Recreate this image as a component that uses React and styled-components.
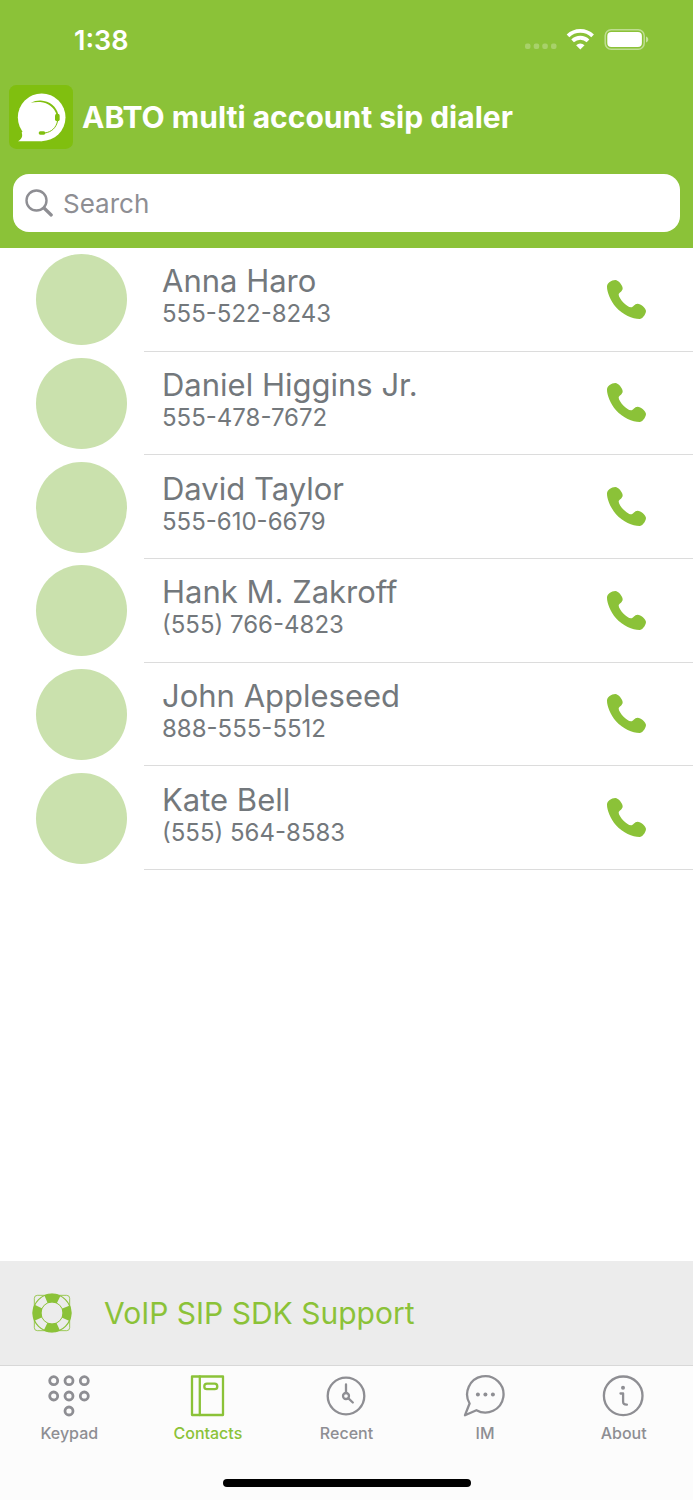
import React, { useState } from 'react'
import styled, { createGlobalStyle } from 'styled-components'

const contacts = [
  { name: 'Anna Haro', phone: '555-522-8243' },
  { name: 'Daniel Higgins Jr.', phone: '555-478-7672' },
  { name: 'David Taylor', phone: '555-610-6679' },
  { name: 'Hank M. Zakroff', phone: '(555) 766-4823' },
  { name: 'John Appleseed', phone: '888-555-5512' },
  { name: 'Kate Bell', phone: '(555) 564-8583' },
]

const tabs = [
  { label: 'Keypad', Icon: KeypadIcon },
  { label: 'Contacts', Icon: ContactsIcon },
  { label: 'Recent', Icon: RecentIcon },
  { label: 'IM', Icon: MessageIcon },
  { label: 'About', Icon: AboutIcon },
]

function App() {
  const [query, setQuery] = useState('')
  const [active, setActive] = useState('Contacts')

  const visible = contacts.filter((c) => c.name.toLowerCase().includes(query.toLowerCase()))

  return (
    <>
      <GlobalStyle />
      <Page>
        <Header>
          <StatusBar>
            <Time>1:38</Time>
            <StatusIcons />
          </StatusBar>
          <Brand>
            <LogoIcon />
            <Title>ABTO multi account sip dialer</Title>
          </Brand>
          <SearchBox>
            <SearchIcon />
            <SearchInput
              type="text"
              aria-label="Search"
              placeholder="Search"
              value={query}
              onChange={(e) => setQuery(e.target.value)}
            />
          </SearchBox>
        </Header>

        <Main>
          <ContactList>
            {visible.map((c) => (
              <ContactRow key={c.name}>
                <Avatar />
                <ContactBody>
                  <div>
                    <ContactName>{c.name}</ContactName>
                    <ContactPhone>{c.phone}</ContactPhone>
                  </div>
                  <CallButton aria-label={'Call ' + c.name}>
                    <PhoneIcon />
                  </CallButton>
                </ContactBody>
              </ContactRow>
            ))}
          </ContactList>
        </Main>

        <Support href="#support">
          <LifebuoyIcon />
          VoIP SIP SDK Support
        </Support>

        <Footer>
          <TabBar>
            {tabs.map(({ label, Icon }) => (
              <Tab key={label} $active={label === active} onClick={() => setActive(label)}>
                <Icon />
                {label}
              </Tab>
            ))}
          </TabBar>
          <HomeIndicator />
        </Footer>
      </Page>
    </>
  )
}

function StatusIcons() {
  return (
    <svg width="124" height="24" viewBox="0 0 124 24" fill="#fff" aria-hidden="true">
      <g opacity="0.25">
        <rect x="0" y="15.5" width="5.5" height="5.5" rx="2" />
        <rect x="8.7" y="15.5" width="5.5" height="5.5" rx="2" />
        <rect x="17.3" y="15.5" width="5.5" height="5.5" rx="2" />
        <rect x="26" y="15.5" width="5.5" height="5.5" rx="2" />
      </g>
      <g fill="none" stroke="#fff" strokeWidth="3.8">
        <path d="M43 7.9a17.6 17.6 0 0 1 24.6 0" />
        <path d="M47.6 12.9a11 11 0 0 1 15.4 0" />
      </g>
      <path d="M55.3 21.6l-4.2-4.4a6.2 6.2 0 0 1 8.4 0z" />
      <rect x="80.2" y="1.8" width="39" height="19.4" rx="6" fill="none" stroke="#fff" strokeWidth="1.5" opacity="0.45" />
      <rect x="82.3" y="4" width="34.6" height="15" rx="4" />
      <path d="M121 8.5c3 1 3 5 0 6z" opacity="0.5" />
    </svg>
  )
}

function LogoIcon() {
  return (
    <svg width="64" height="64" viewBox="0 0 192 192" aria-hidden="true">
      <rect width="192" height="192" rx="22" fill="#80bf0f" />
      <circle cx="98" cy="97" r="71.500" fill="#fff" />
      <path d="M98 168.500H27c11-6 15-14 11-26L60 120Z" fill="#fff" />
      <path d="M65 53Q80 46 95 46.500C122 48 143 65 148 89h-5C136 68 118 53 94 51Q80 50 65 53Z" fill="#80bf0f" />
      <rect x="138" y="86" width="14" height="23" rx="6" fill="#80bf0f" />
      <path d="M146 107c-4 20-17 34-39 37" fill="none" stroke="#80bf0f" strokeWidth="3" />
      <rect x="89" y="139" width="20" height="10" rx="5" fill="#80bf0f" />
    </svg>
  )
}

function SearchIcon() {
  return (
    <svg width="28" height="28" viewBox="0 0 28 28" fill="none" stroke="#8e8e93" aria-hidden="true">
      <circle cx="11.500" cy="11.500" r="10" strokeWidth="2.400" />
      <path d="M19 19l7.200 7" strokeWidth="3.200" strokeLinecap="round" />
    </svg>
  )
}

function PhoneIcon() {
  return (
    <svg width="39" height="39" viewBox="0 0 117 117" fill="currentColor" aria-hidden="true">
      <path d="M0 20C0 9 13 0 25 0C34 0 47 16 47 25C47 35 35 38 35 44C36 56 59 81 72 82C79 82 82 71 92 71C101 71 117 84 117 93C116 104 106 117 98 117C76 117 48 105 27 82C10 61 0 36 0 20Z" />
    </svg>
  )
}

function LifebuoyIcon() {
  return (
    <svg width="40" height="40" viewBox="0 0 120 120" fill="none" stroke="currentColor" aria-hidden="true">
      <rect x="7" y="7" width="106" height="106" rx="9" strokeWidth="2.500" />
      <circle cx="60" cy="60" r="57" fill="#ececec" strokeWidth="3.500" />
      <circle cx="60" cy="60" r="33" strokeWidth="3" />
      <circle cx="60" cy="60" r="45" strokeWidth="26" pathLength="80" strokeDasharray="11 9" strokeDashoffset="5.500" />
    </svg>
  )
}

function TabIcon({ children }) {
  return (
    <svg
      width="44"
      height="44"
      viewBox="0 0 44 44"
      fill="none"
      stroke="currentColor"
      strokeWidth="2.300"
      strokeLinecap="round"
      strokeLinejoin="round"
      aria-hidden="true"
    >
      {children}
    </svg>
  )
}

function KeypadIcon() {
  const dots = [[6.7, 6.7], [22, 6.7], [37.3, 6.7], [6.7, 22], [22, 22], [37.3, 22], [22, 37]]
  return (
    <TabIcon>
      {dots.map(([x, y]) => (
        <circle key={x + '-' + y} cx={x} cy={y} r="4" strokeWidth="2.800" />
      ))}
    </TabIcon>
  )
}

function ContactsIcon() {
  return (
    <TabIcon>
      <rect x="6" y="2.500" width="31" height="38.500" />
      <path d="M13.800 2.500v38.500" />
      <rect x="18.300" y="9.700" width="13" height="5.500" rx="2.700" />
    </TabIcon>
  )
}

function RecentIcon() {
  return (
    <TabIcon>
      <circle cx="22" cy="22" r="18.300" />
      <path d="M22 10.500v8.500M24.200 24.200l4.600 4.300" />
      <circle cx="22" cy="22" r="3" />
    </TabIcon>
  )
}

function MessageIcon() {
  return (
    <TabIcon>
      <path d="M6.600 29.500A18.200 18.200 0 1 1 13.400 36.200L2 41.200Z" />
      <g fill="currentColor" stroke="none">
        <circle cx="14.900" cy="20.500" r="2" />
        <circle cx="22.400" cy="20.500" r="2" />
        <circle cx="29.900" cy="20.500" r="2" />
      </g>
    </TabIcon>
  )
}

function AboutIcon() {
  return (
    <TabIcon>
      <circle cx="21.200" cy="21.800" r="19.300" />
      <path d="M18.500 19.500h2.600v8c0 2.200.9 3.300 3.800 3.200" />
      <circle cx="21" cy="13.700" r="2" fill="currentColor" stroke="none" />
    </TabIcon>
  )
}

const GlobalStyle = createGlobalStyle`
  * {
    box-sizing: border-box;
  }
  body {
    margin: 0;
    background-color: #ffffff;
    font-family: Inter, "Liberation Sans", sans-serif;
  }
  svg {
    display: block;
    flex-shrink: 0;
  }
`

const Page = styled.div`
  display: flex;
  flex-direction: column;
  min-height: 100vh;
`

const Header = styled.header`
  padding-bottom: 16px;
  background-color: #8bc238;
  color: #ffffff;
`

const StatusBar = styled.div`
  display: flex;
  align-items: center;
  justify-content: space-between;
  height: 80px;
  padding: 0 44px 0 74px;
`

const Time = styled.span`
  font-size: 27px;
  font-weight: 600;
`

const Brand = styled.div`
  display: flex;
  align-items: center;
  gap: 9px;
  padding: 5px 9px 0;
`

const Title = styled.h1`
  margin: 0;
  font-size: 30px;
  font-weight: 700;
`

const SearchBox = styled.label`
  display: flex;
  align-items: center;
  gap: 10px;
  height: 58px;
  margin: 25px 13px 0;
  padding: 0 12px;
  border-radius: 16px;
  background-color: #ffffff;
`

const SearchInput = styled.input`
  flex: 1;
  min-width: 0;
  padding: 0;
  border: none;
  outline: none;
  background: transparent;
  color: #6d7278;
  font-family: inherit;
  font-size: 26px;
  &::placeholder {
    color: #8e8e93;
    opacity: 1;
  }
`

const Main = styled.main`
  flex: 1;
`

const ContactList = styled.ul`
  display: grid;
  grid-auto-rows: 1fr;
  min-height: 622px;
  margin: 0;
  padding: 0;
  list-style: none;
`

const ContactRow = styled.li`
  display: flex;
  align-items: center;
  gap: 17px;
  padding-left: 36px;
`

const Avatar = styled.div`
  flex-shrink: 0;
  width: 91px;
  height: 91px;
  border-radius: 50%;
  background-color: #cae1ad;
`

const ContactBody = styled.div`
  flex: 1;
  display: flex;
  align-items: center;
  justify-content: space-between;
  align-self: stretch;
  padding: 0 47px 0 18px;
  border-bottom: 1px solid #dcdcdc;
  color: #73787c;
`

const ContactName = styled.div`
  font-size: 31px;
  line-height: 34px;
`

const ContactPhone = styled.div`
  padding-bottom: 4px;
  font-size: 24px;
  line-height: 32px;
`

const CallButton = styled.button`
  padding: 0;
  border: none;
  background: none;
  color: #8bc238;
  cursor: pointer;
`

const Support = styled.a`
  display: flex;
  align-items: center;
  gap: 32px;
  height: 104px;
  padding: 0 32px;
  background-color: #ececec;
  color: #8bc238;
  font-size: 30px;
  text-decoration: none;
`

const Footer = styled.footer`
  display: flex;
  flex-direction: column;
  align-items: center;
  gap: 35px;
  padding-bottom: 13px;
  border-top: 1px solid #d8d8d8;
  background-color: #fcfcfc;
`

const TabBar = styled.nav`
  display: grid;
  grid-template-columns: repeat(5, 1fr);
  width: 100%;
`

const Tab = styled.button`
  display: flex;
  flex-direction: column;
  align-items: center;
  gap: 4px;
  padding: 8px 0 0;
  border: none;
  background: none;
  color: ${(props) => (props.$active ? '#8bc238' : '#8e8e93')};
  font-family: inherit;
  font-size: 16px;
  font-weight: 500;
  line-height: 22px;
  cursor: pointer;
`

const HomeIndicator = styled.div`
  width: 248px;
  height: 8px;
  border-radius: 4px;
  background-color: #000000;
`

export default App
